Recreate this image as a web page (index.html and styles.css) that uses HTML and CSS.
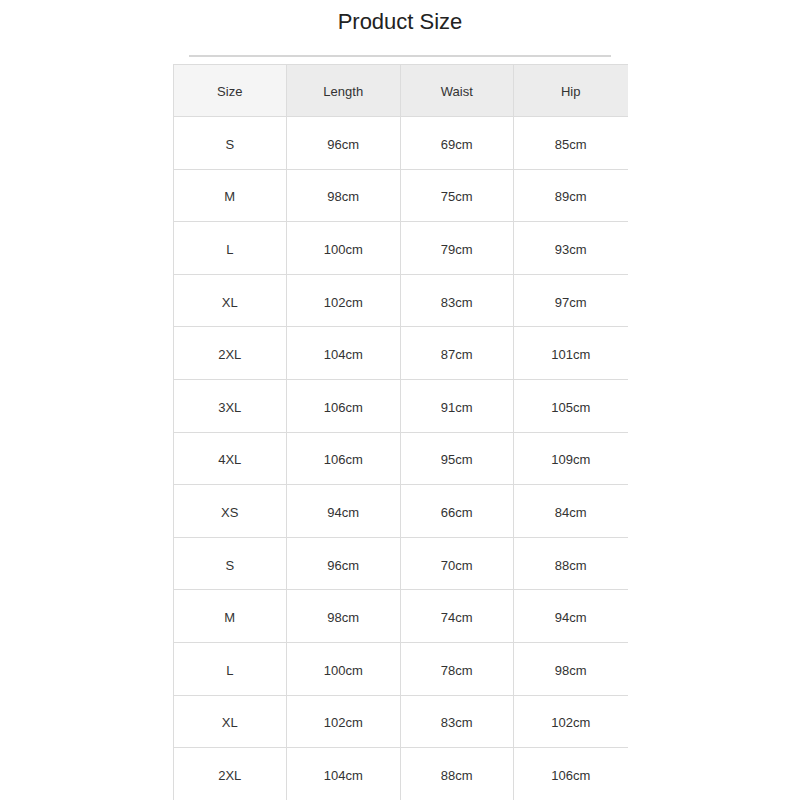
FILE: index.html
```html
<!DOCTYPE html>
<html lang="en">
<head>
  <meta charset="UTF-8">
  <title>Product Size</title>
  <link rel="stylesheet" href="styles.css">
</head>
<body>

  <h1 class="title">Product Size</h1>
  <div class="divider"></div>

  <div class="size-table">
    <div class="cell head first">Size</div>
    <div class="cell head">Length</div>
    <div class="cell head">Waist</div>
    <div class="cell head">Hip</div>

    <div class="cell">S</div><div class="cell">96cm</div><div class="cell">69cm</div><div class="cell">85cm</div>
    <div class="cell">M</div><div class="cell">98cm</div><div class="cell">75cm</div><div class="cell">89cm</div>
    <div class="cell">L</div><div class="cell">100cm</div><div class="cell">79cm</div><div class="cell">93cm</div>
    <div class="cell">XL</div><div class="cell">102cm</div><div class="cell">83cm</div><div class="cell">97cm</div>
    <div class="cell">2XL</div><div class="cell">104cm</div><div class="cell">87cm</div><div class="cell">101cm</div>
    <div class="cell">3XL</div><div class="cell">106cm</div><div class="cell">91cm</div><div class="cell">105cm</div>
    <div class="cell">4XL</div><div class="cell">106cm</div><div class="cell">95cm</div><div class="cell">109cm</div>
    <div class="cell">XS</div><div class="cell">94cm</div><div class="cell">66cm</div><div class="cell">84cm</div>
    <div class="cell">S</div><div class="cell">96cm</div><div class="cell">70cm</div><div class="cell">88cm</div>
    <div class="cell">M</div><div class="cell">98cm</div><div class="cell">74cm</div><div class="cell">94cm</div>
    <div class="cell">L</div><div class="cell">100cm</div><div class="cell">78cm</div><div class="cell">98cm</div>
    <div class="cell">XL</div><div class="cell">102cm</div><div class="cell">83cm</div><div class="cell">102cm</div>
    <div class="cell">2XL</div><div class="cell">104cm</div><div class="cell">88cm</div><div class="cell">106cm</div>
  </div>

</body>
</html>
```

FILE: styles.css
```css
body {
  font-family: 'Liberation Sans', Arial, sans-serif;
  background-color: #ffffff;
  color: #333333;
  margin: 0;
  padding: 0;
}

.title {
  margin: 0;
  padding-top: 9px;
  font-size: 22px;
  font-weight: normal;
  line-height: 26px;
  text-align: center;
  color: #222222;
}

.divider {
  width: 422px;
  height: 2px;
  margin: 20px auto 6.5px;
  background-color: #d6d6d6;
}

.size-table {
  display: grid;
  grid-template-columns: repeat(4, 1fr);
  grid-auto-rows: 52.6px;
  width: 454px;
  margin: 0 auto;
  border-top: 1px solid #dcdcdc;
  border-left: 1px solid #dcdcdc;
}

.cell {
  display: flex;
  align-items: center;
  justify-content: center;
  padding-top: 3px;
  font-size: 13px;
  color: #333333;
  border-right: 1px solid #dcdcdc;
  border-bottom: 1px solid #dcdcdc;
}

.cell:nth-child(4n) {
  border-right: none;
}

.head {
  background-color: #ececec;
}

.head.first {
  background-color: #f5f5f5;
}
```
